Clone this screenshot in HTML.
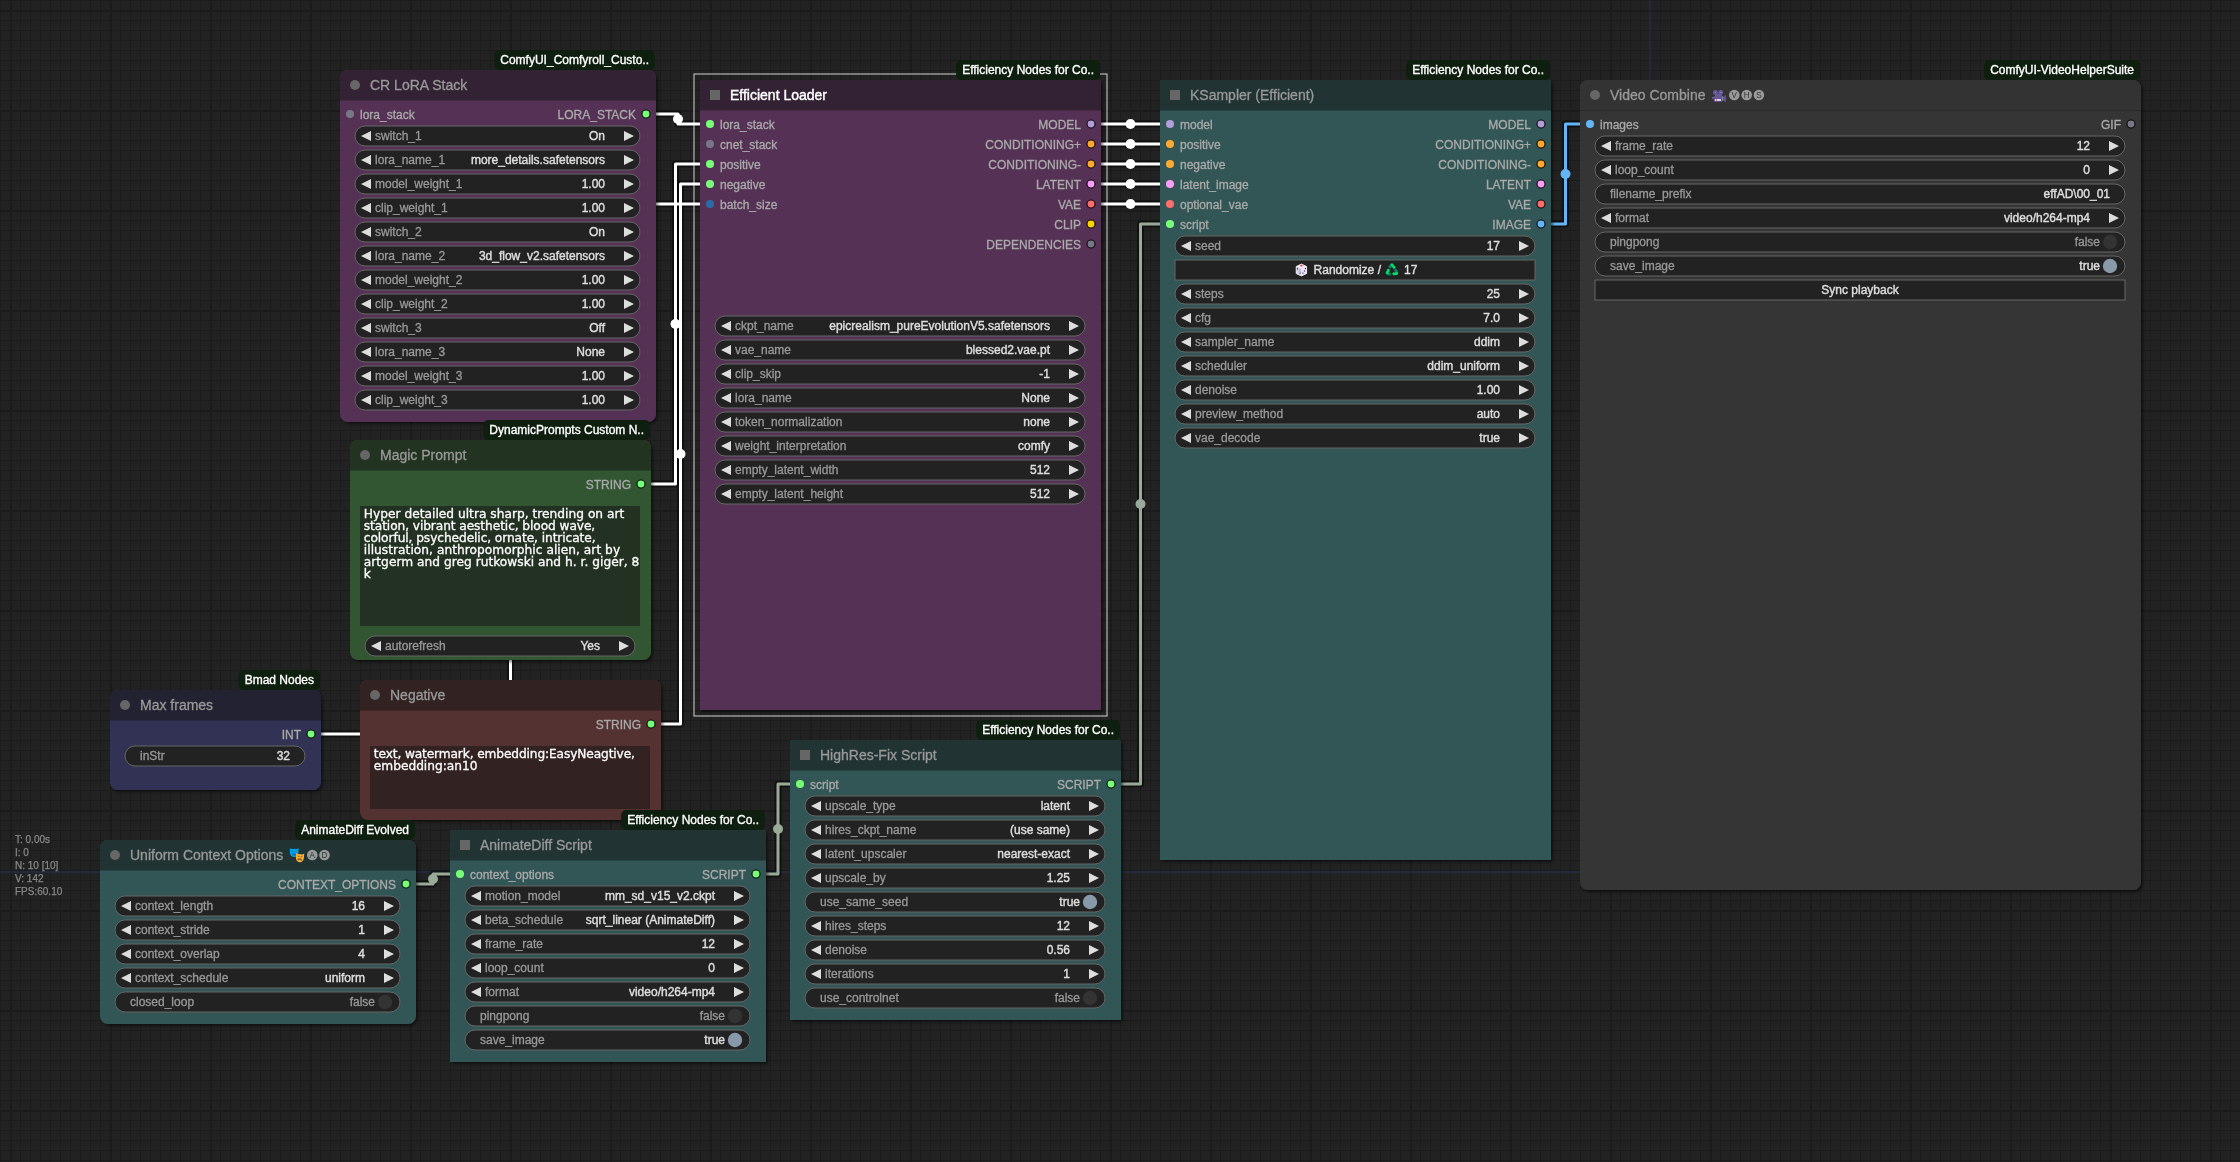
<!DOCTYPE html>
<html lang="en"><head><meta charset="utf-8"><title>ComfyUI</title>
<style>
html,body{margin:0;padding:0;background:#222;overflow:hidden}
svg{display:block;font-family:"Liberation Sans", sans-serif;will-change:transform}
text{white-space:pre;stroke-width:.3px}.wv,.wc,.wt,.tts{stroke-width:.42px}
.tt{font-size:14px;fill:#999;stroke:#999}.tts{font-size:14px;fill:#FFF;stroke:#FFF}
.sl{font-size:12px;fill:#AAA;stroke:#AAA}.sr{font-size:12px;fill:#AAA;stroke:#AAA;text-anchor:end}
.wb{fill:#222;stroke:#666;stroke-width:1}
.ar{fill:#DDD}
.wl{font-size:12px;fill:#999;stroke:#999}
.wv{font-size:12px;fill:#DDD;stroke:#DDD;text-anchor:end}
.wvo{font-size:12px;fill:#999;stroke:#999;text-anchor:end}
.wc{font-size:12px;fill:#DDD;stroke:#DDD;text-anchor:middle}
.wt{font-size:12px;fill:#DDD;stroke:#DDD}
.bd{font-size:12px;fill:#FFF;stroke:#FFF;stroke-width:.35px;paint-order:stroke}
.inf{font-size:10px;fill:#888;stroke:#888;stroke-width:.25px}
.ta{font-family:"DejaVu Sans", "Liberation Sans", sans-serif;font-size:12.2px;fill:#FAFAFA;stroke:#FAFAFA;stroke-width:.35px}
.cl{font-size:9.4px;text-anchor:middle;stroke:none}
.lk path{fill:none;stroke-linejoin:round;stroke-linecap:butt}
</style></head><body>
<svg width="2240" height="1162" viewBox="0 0 2240 1162">
<defs>
<pattern id="grid" x="10" y="10" width="100" height="100" patternUnits="userSpaceOnUse">
<rect width="100" height="100" fill="#222"/>
<path d="M10.5 0V100M0 10.5H100M20.5 0V100M0 20.5H100M30.5 0V100M0 30.5H100M40.5 0V100M0 40.5H100M50.5 0V100M0 50.5H100M60.5 0V100M0 60.5H100M70.5 0V100M0 70.5H100M80.5 0V100M0 80.5H100M90.5 0V100M0 90.5H100" stroke="#1c1c1c" stroke-width="1" fill="none"/>
<path d="M1 0V100M0 1H100" stroke="#1b1b1b" stroke-width="2" fill="none"/>
</pattern>
<filter id="sh" x="-5%" y="-5%" width="110%" height="110%"><feDropShadow dx="2" dy="2" stdDeviation="1.5" flood-color="#000" flood-opacity=".5"/></filter>
</defs>
<rect width="2240" height="1162" fill="url(#grid)"/>
<path d="M0 872H1650V0" fill="none" stroke="#235" stroke-width="1"/>
<g class="lk"><path d="M646 114H678V124H710" stroke="#000" stroke-opacity=".5" stroke-width="7"/><path d="M641 484H675.5V164H710" stroke="#000" stroke-opacity=".5" stroke-width="7"/><path d="M651 724H680.5V184H710" stroke="#000" stroke-opacity=".5" stroke-width="7"/><path d="M311 734H510.5V204H710" stroke="#000" stroke-opacity=".5" stroke-width="7"/><path d="M1091 124H1130.5V124H1170" stroke="#000" stroke-opacity=".5" stroke-width="7"/><path d="M1091 144H1130.5V144H1170" stroke="#000" stroke-opacity=".5" stroke-width="7"/><path d="M1091 164H1130.5V164H1170" stroke="#000" stroke-opacity=".5" stroke-width="7"/><path d="M1091 184H1130.5V184H1170" stroke="#000" stroke-opacity=".5" stroke-width="7"/><path d="M1091 204H1130.5V204H1170" stroke="#000" stroke-opacity=".5" stroke-width="7"/><path d="M1111 784H1140.5V224H1170" stroke="#000" stroke-opacity=".5" stroke-width="7"/><path d="M756 874H778V784H800" stroke="#000" stroke-opacity=".5" stroke-width="7"/><path d="M406 884H433V874H460" stroke="#000" stroke-opacity=".5" stroke-width="7"/><path d="M1541 224H1565.5V124H1590" stroke="#000" stroke-opacity=".5" stroke-width="7"/><path d="M646 114H678V124H710" stroke="#FFF" stroke-width="3"/><circle cx="678" cy="119" r="5" fill="#FFF" stroke="none"/><path d="M641 484H675.5V164H710" stroke="#FFF" stroke-width="3"/><circle cx="675.5" cy="324" r="5" fill="#FFF" stroke="none"/><path d="M651 724H680.5V184H710" stroke="#FFF" stroke-width="3"/><circle cx="680.5" cy="454" r="5" fill="#FFF" stroke="none"/><path d="M311 734H510.5V204H710" stroke="#FFF" stroke-width="3"/><circle cx="510.5" cy="469" r="5" fill="#FFF" stroke="none"/><path d="M1091 124H1130.5V124H1170" stroke="#FFF" stroke-width="3"/><circle cx="1130.5" cy="124" r="5" fill="#FFF" stroke="none"/><path d="M1091 144H1130.5V144H1170" stroke="#FFF" stroke-width="3"/><circle cx="1130.5" cy="144" r="5" fill="#FFF" stroke="none"/><path d="M1091 164H1130.5V164H1170" stroke="#FFF" stroke-width="3"/><circle cx="1130.5" cy="164" r="5" fill="#FFF" stroke="none"/><path d="M1091 184H1130.5V184H1170" stroke="#FFF" stroke-width="3"/><circle cx="1130.5" cy="184" r="5" fill="#FFF" stroke="none"/><path d="M1091 204H1130.5V204H1170" stroke="#FFF" stroke-width="3"/><circle cx="1130.5" cy="204" r="5" fill="#FFF" stroke="none"/><path d="M1111 784H1140.5V224H1170" stroke="#9A9" stroke-width="3"/><circle cx="1140.5" cy="504" r="5" fill="#9A9" stroke="none"/><path d="M756 874H778V784H800" stroke="#9A9" stroke-width="3"/><circle cx="778" cy="829" r="5" fill="#9A9" stroke="none"/><path d="M406 884H433V874H460" stroke="#9A9" stroke-width="3"/><circle cx="433" cy="879" r="5" fill="#9A9" stroke="none"/><path d="M1541 224H1565.5V124H1590" stroke="#64B5F6" stroke-width="3"/><circle cx="1565.5" cy="174" r="5" fill="#64B5F6" stroke="none"/></g>
<g>
<rect x="340" y="70" width="316" height="352" rx="8" fill="#535" filter="url(#sh)"/>
<rect x="340" y="99" width="316" height="2" fill="#000" fill-opacity=".2"/>
<path d="M340 100V78a8 8 0 0 1 8 -8H648a8 8 0 0 1 8 8V100Z" fill="#323"/>
<circle cx="355" cy="85" r="5" fill="#666"/>
<text class="tt" x="370" y="90">CR LoRA Stack</text>
<circle cx="350" cy="114" r="4" fill="#778"/>
<text class="sl" x="360" y="119">lora_stack</text>
<circle cx="646" cy="114" r="4" fill="#7F7" stroke="#000" stroke-opacity=".9" stroke-width="1.1"/>
<text class="sr" x="636" y="119">LORA_STACK</text>
<rect class="wb" x="355" y="126" width="285" height="20" rx="10"/>
<path class="ar" d="M371 131L361 136L371 141ZM624 131L634 136L624 141Z"/>
<text class="wl" x="375" y="140">switch_1</text>
<text class="wv" x="605" y="140">On</text>
<rect class="wb" x="355" y="150" width="285" height="20" rx="10"/>
<path class="ar" d="M371 155L361 160L371 165ZM624 155L634 160L624 165Z"/>
<text class="wl" x="375" y="164">lora_name_1</text>
<text class="wv" x="605" y="164">more_details.safetensors</text>
<rect class="wb" x="355" y="174" width="285" height="20" rx="10"/>
<path class="ar" d="M371 179L361 184L371 189ZM624 179L634 184L624 189Z"/>
<text class="wl" x="375" y="188">model_weight_1</text>
<text class="wv" x="605" y="188">1.00</text>
<rect class="wb" x="355" y="198" width="285" height="20" rx="10"/>
<path class="ar" d="M371 203L361 208L371 213ZM624 203L634 208L624 213Z"/>
<text class="wl" x="375" y="212">clip_weight_1</text>
<text class="wv" x="605" y="212">1.00</text>
<rect class="wb" x="355" y="222" width="285" height="20" rx="10"/>
<path class="ar" d="M371 227L361 232L371 237ZM624 227L634 232L624 237Z"/>
<text class="wl" x="375" y="236">switch_2</text>
<text class="wv" x="605" y="236">On</text>
<rect class="wb" x="355" y="246" width="285" height="20" rx="10"/>
<path class="ar" d="M371 251L361 256L371 261ZM624 251L634 256L624 261Z"/>
<text class="wl" x="375" y="260">lora_name_2</text>
<text class="wv" x="605" y="260">3d_flow_v2.safetensors</text>
<rect class="wb" x="355" y="270" width="285" height="20" rx="10"/>
<path class="ar" d="M371 275L361 280L371 285ZM624 275L634 280L624 285Z"/>
<text class="wl" x="375" y="284">model_weight_2</text>
<text class="wv" x="605" y="284">1.00</text>
<rect class="wb" x="355" y="294" width="285" height="20" rx="10"/>
<path class="ar" d="M371 299L361 304L371 309ZM624 299L634 304L624 309Z"/>
<text class="wl" x="375" y="308">clip_weight_2</text>
<text class="wv" x="605" y="308">1.00</text>
<rect class="wb" x="355" y="318" width="285" height="20" rx="10"/>
<path class="ar" d="M371 323L361 328L371 333ZM624 323L634 328L624 333Z"/>
<text class="wl" x="375" y="332">switch_3</text>
<text class="wv" x="605" y="332">Off</text>
<rect class="wb" x="355" y="342" width="285" height="20" rx="10"/>
<path class="ar" d="M371 347L361 352L371 357ZM624 347L634 352L624 357Z"/>
<text class="wl" x="375" y="356">lora_name_3</text>
<text class="wv" x="605" y="356">None</text>
<rect class="wb" x="355" y="366" width="285" height="20" rx="10"/>
<path class="ar" d="M371 371L361 376L371 381ZM624 371L634 376L624 381Z"/>
<text class="wl" x="375" y="380">model_weight_3</text>
<text class="wv" x="605" y="380">1.00</text>
<rect class="wb" x="355" y="390" width="285" height="20" rx="10"/>
<path class="ar" d="M371 395L361 400L371 405ZM624 395L634 400L624 405Z"/>
<text class="wl" x="375" y="404">clip_weight_3</text>
<text class="wv" x="605" y="404">1.00</text>
<rect x="494.29" y="50" width="160.71" height="20" rx="5" fill="#0F1F0F"/>
<text class="bd" x="500.29" y="64">ComfyUI_Comfyroll_Custo..</text>
</g>
<g>
<rect x="350" y="440" width="301" height="220" rx="8" fill="#353" filter="url(#sh)"/>
<rect x="350" y="469" width="301" height="2" fill="#000" fill-opacity=".2"/>
<path d="M350 470V448a8 8 0 0 1 8 -8H643a8 8 0 0 1 8 8V470Z" fill="#232"/>
<circle cx="365" cy="455" r="5" fill="#666"/>
<text class="tt" x="380" y="460">Magic Prompt</text>
<circle cx="641" cy="484" r="4" fill="#7F7" stroke="#000" stroke-opacity=".9" stroke-width="1.1"/>
<text class="sr" x="631" y="489">STRING</text>
<rect x="360" y="506" width="280" height="120" fill="#223122"/>
<text class="ta" x="363.8" y="517.5" textLength="260.5" lengthAdjust="spacing">Hyper detailed ultra sharp, trending on art</text>
<text class="ta" x="363.8" y="529.5" textLength="231.4" lengthAdjust="spacing">station, vibrant aesthetic, blood wave,</text>
<text class="ta" x="363.8" y="541.5" textLength="231.8" lengthAdjust="spacing">colorful, psychedelic, ornate, intricate,</text>
<text class="ta" x="363.8" y="553.5" textLength="256.3" lengthAdjust="spacing">illustration, anthropomorphic alien, art by</text>
<text class="ta" x="363.8" y="565.5" textLength="275.5" lengthAdjust="spacing">artgerm and greg rutkowski and h. r. giger, 8</text>
<text class="ta" x="363.8" y="577.5">k</text>
<rect class="wb" x="365" y="636" width="270" height="20" rx="10"/>
<path class="ar" d="M381 641L371 646L381 651ZM619 641L629 646L619 651Z"/>
<text class="wl" x="385" y="650">autorefresh</text>
<text class="wv" x="600" y="650">Yes</text>
<rect x="483.3" y="420" width="166.7" height="20" rx="5" fill="#0F1F0F"/>
<text class="bd" x="489.3" y="434">DynamicPrompts Custom N..</text>
</g>
<g>
<rect x="360" y="680" width="301" height="140" rx="8" fill="#533" filter="url(#sh)"/>
<rect x="360" y="709" width="301" height="2" fill="#000" fill-opacity=".2"/>
<path d="M360 710V688a8 8 0 0 1 8 -8H653a8 8 0 0 1 8 8V710Z" fill="#322"/>
<circle cx="375" cy="695" r="5" fill="#666"/>
<text class="tt" x="390" y="700">Negative</text>
<circle cx="651" cy="724" r="4" fill="#7F7" stroke="#000" stroke-opacity=".9" stroke-width="1.1"/>
<text class="sr" x="641" y="729">STRING</text>
<rect x="370" y="746" width="280" height="63" fill="#332222"/>
<text class="ta" x="373.8" y="757.5" textLength="261.1" lengthAdjust="spacing">text, watermark, embedding:EasyNeagtive,</text>
<text class="ta" x="373.8" y="769.5">embedding:an10</text>
</g>
<g>
<rect x="110" y="690" width="211" height="100" rx="8" fill="#335" filter="url(#sh)"/>
<rect x="110" y="719" width="211" height="2" fill="#000" fill-opacity=".2"/>
<path d="M110 720V698a8 8 0 0 1 8 -8H313a8 8 0 0 1 8 8V720Z" fill="#223"/>
<circle cx="125" cy="705" r="5" fill="#666"/>
<text class="tt" x="140" y="710">Max frames</text>
<circle cx="311" cy="734" r="4" fill="#7F7" stroke="#000" stroke-opacity=".9" stroke-width="1.1"/>
<text class="sr" x="301" y="739">INT</text>
<rect class="wb" x="125" y="746" width="180" height="20" rx="10"/>
<text class="wl" x="140" y="760">inStr</text>
<text class="wv" x="290" y="760">32</text>
<rect x="238.63" y="670" width="81.37" height="20" rx="5" fill="#0F1F0F"/>
<text class="bd" x="244.63" y="684">Bmad Nodes</text>
</g>
<g>
<rect x="100" y="840" width="316" height="184" rx="8" fill="#355" filter="url(#sh)"/>
<rect x="100" y="869" width="316" height="2" fill="#000" fill-opacity=".2"/>
<path d="M100 870V848a8 8 0 0 1 8 -8H408a8 8 0 0 1 8 8V870Z" fill="#233"/>
<circle cx="115" cy="855" r="5" fill="#666"/>
<text class="tt" x="130" y="860">Uniform Context Options</text>
<g transform="translate(289.9,847.7)"><path d="M0 .2C1.4 1.5 2.9 1.6 4.3 1.1 5.7 1.6 7.2 1.5 8.6 .2V4.8C8.6 7.4 6.6 9.4 4.3 9.4 2 9.4 0 7.4 0 4.8Z" fill="#00A6ED"/><path d="M1.5 3.7Q2.6 3 3.6 3.7M5 3.7Q6 3 7.1 3.7" fill="none" stroke="#0074BA" stroke-width=".9"/><path d="M1.9 5.6Q4.3 6.4 6.7 5.6 6 8.2 4.3 8.2 2.6 8.2 1.9 5.6Z" fill="#0074BA"/></g>
<g transform="translate(295.9,852.9) rotate(4 4 4.6)"><path d="M0 .2C1.3 1.5 2.7 1.6 4 1.1 5.3 1.6 6.7 1.5 8 .2V4.8C8 7.4 6.2 9.3 4 9.3 1.8 9.3 0 7.4 0 4.8Z" fill="#FFB02E"/><path d="M1.5 3.2Q2.5 4 3.4 3.6M4.6 3.6Q5.5 4 6.5 3.2" fill="none" stroke="#6D4534" stroke-width=".8"/><path d="M2 7.3Q4 4.6 6 7.3" fill="none" stroke="#6D4534" stroke-width="1.1"/></g>
<circle cx="312.3" cy="855" r="5.3" fill="#999"/><text class="cl" transform="translate(312.3,858.4) scale(.86,1)" fill="#233">A</text>
<circle cx="324.5" cy="855" r="5.3" fill="#999"/><text class="cl" transform="translate(324.5,858.4) scale(.86,1)" fill="#233">D</text>
<circle cx="406" cy="884" r="4" fill="#7F7" stroke="#000" stroke-opacity=".9" stroke-width="1.1"/>
<text class="sr" x="396" y="889">CONTEXT_OPTIONS</text>
<rect class="wb" x="115" y="896" width="285" height="20" rx="10"/>
<path class="ar" d="M131 901L121 906L131 911ZM384 901L394 906L384 911Z"/>
<text class="wl" x="135" y="910">context_length</text>
<text class="wv" x="365" y="910">16</text>
<rect class="wb" x="115" y="920" width="285" height="20" rx="10"/>
<path class="ar" d="M131 925L121 930L131 935ZM384 925L394 930L384 935Z"/>
<text class="wl" x="135" y="934">context_stride</text>
<text class="wv" x="365" y="934">1</text>
<rect class="wb" x="115" y="944" width="285" height="20" rx="10"/>
<path class="ar" d="M131 949L121 954L131 959ZM384 949L394 954L384 959Z"/>
<text class="wl" x="135" y="958">context_overlap</text>
<text class="wv" x="365" y="958">4</text>
<rect class="wb" x="115" y="968" width="285" height="20" rx="10"/>
<path class="ar" d="M131 973L121 978L131 983ZM384 973L394 978L384 983Z"/>
<text class="wl" x="135" y="982">context_schedule</text>
<text class="wv" x="365" y="982">uniform</text>
<rect class="wb" x="115" y="992" width="285" height="20" rx="10"/>
<circle cx="385" cy="1002" r="7.2" fill="#333"/>
<text class="wl" x="130" y="1006">closed_loop</text>
<text class="wvo" x="375" y="1006">false</text>
<rect x="295.17" y="820" width="119.83" height="20" rx="5" fill="#0F1F0F"/>
<text class="bd" x="301.17" y="834">AnimateDiff Evolved</text>
</g>
<g>
<rect x="450" y="830" width="316" height="232" fill="#355" filter="url(#sh)"/>
<rect x="450" y="859" width="316" height="2" fill="#000" fill-opacity=".2"/>
<rect x="450" y="830" width="316" height="30" fill="#233"/>
<rect x="460" y="840" width="10" height="10" fill="#666"/>
<text class="tt" x="480" y="850">AnimateDiff Script</text>
<circle cx="460" cy="874" r="4" fill="#7F7"/>
<text class="sl" x="470" y="879">context_options</text>
<circle cx="756" cy="874" r="4" fill="#7F7" stroke="#000" stroke-opacity=".9" stroke-width="1.1"/>
<text class="sr" x="746" y="879">SCRIPT</text>
<rect class="wb" x="465" y="886" width="285" height="20" rx="10"/>
<path class="ar" d="M481 891L471 896L481 901ZM734 891L744 896L734 901Z"/>
<text class="wl" x="485" y="900">motion_model</text>
<text class="wv" x="715" y="900">mm_sd_v15_v2.ckpt</text>
<rect class="wb" x="465" y="910" width="285" height="20" rx="10"/>
<path class="ar" d="M481 915L471 920L481 925ZM734 915L744 920L734 925Z"/>
<text class="wl" x="485" y="924">beta_schedule</text>
<text class="wv" x="715" y="924">sqrt_linear (AnimateDiff)</text>
<rect class="wb" x="465" y="934" width="285" height="20" rx="10"/>
<path class="ar" d="M481 939L471 944L481 949ZM734 939L744 944L734 949Z"/>
<text class="wl" x="485" y="948">frame_rate</text>
<text class="wv" x="715" y="948">12</text>
<rect class="wb" x="465" y="958" width="285" height="20" rx="10"/>
<path class="ar" d="M481 963L471 968L481 973ZM734 963L744 968L734 973Z"/>
<text class="wl" x="485" y="972">loop_count</text>
<text class="wv" x="715" y="972">0</text>
<rect class="wb" x="465" y="982" width="285" height="20" rx="10"/>
<path class="ar" d="M481 987L471 992L481 997ZM734 987L744 992L734 997Z"/>
<text class="wl" x="485" y="996">format</text>
<text class="wv" x="715" y="996">video/h264-mp4</text>
<rect class="wb" x="465" y="1006" width="285" height="20" rx="10"/>
<circle cx="735" cy="1016" r="7.2" fill="#333"/>
<text class="wl" x="480" y="1020">pingpong</text>
<text class="wvo" x="725" y="1020">false</text>
<rect class="wb" x="465" y="1030" width="285" height="20" rx="10"/>
<circle cx="735" cy="1040" r="7.2" fill="#89A"/>
<text class="wl" x="480" y="1044">save_image</text>
<text class="wv" x="725" y="1044">true</text>
<rect x="621.16" y="810" width="143.84" height="20" rx="5" fill="#0F1F0F"/>
<text class="bd" x="627.16" y="824">Efficiency Nodes for Co..</text>
</g>
<g>
<rect x="700" y="80" width="401" height="630" fill="#535" filter="url(#sh)"/>
<rect x="700" y="109" width="401" height="2" fill="#000" fill-opacity=".2"/>
<rect x="700" y="80" width="401" height="30" fill="#323"/>
<rect x="710" y="90" width="10" height="10" fill="#666"/>
<text class="tts" x="730" y="100">Efficient Loader</text>
<circle cx="710" cy="124" r="4" fill="#7F7"/>
<text class="sl" x="720" y="129">lora_stack</text>
<circle cx="710" cy="144" r="4" fill="#778"/>
<text class="sl" x="720" y="149">cnet_stack</text>
<circle cx="710" cy="164" r="4" fill="#7F7"/>
<text class="sl" x="720" y="169">positive</text>
<circle cx="710" cy="184" r="4" fill="#7F7"/>
<text class="sl" x="720" y="189">negative</text>
<circle cx="710" cy="204" r="4" fill="#2B6BA3"/>
<text class="sl" x="720" y="209">batch_size</text>
<circle cx="1091" cy="124" r="4" fill="#B39DDB" stroke="#000" stroke-opacity=".9" stroke-width="1.1"/>
<text class="sr" x="1081" y="129">MODEL</text>
<circle cx="1091" cy="144" r="4" fill="#FFA931" stroke="#000" stroke-opacity=".9" stroke-width="1.1"/>
<text class="sr" x="1081" y="149">CONDITIONING+</text>
<circle cx="1091" cy="164" r="4" fill="#FFA931" stroke="#000" stroke-opacity=".9" stroke-width="1.1"/>
<text class="sr" x="1081" y="169">CONDITIONING-</text>
<circle cx="1091" cy="184" r="4" fill="#FF9CF9" stroke="#000" stroke-opacity=".9" stroke-width="1.1"/>
<text class="sr" x="1081" y="189">LATENT</text>
<circle cx="1091" cy="204" r="4" fill="#FF6E6E" stroke="#000" stroke-opacity=".9" stroke-width="1.1"/>
<text class="sr" x="1081" y="209">VAE</text>
<circle cx="1091" cy="224" r="4" fill="#FFD500" stroke="#000" stroke-opacity=".9" stroke-width="1.1"/>
<text class="sr" x="1081" y="229">CLIP</text>
<circle cx="1091" cy="244" r="4" fill="#778" stroke="#000" stroke-opacity=".9" stroke-width="1.1"/>
<text class="sr" x="1081" y="249">DEPENDENCIES</text>
<rect class="wb" x="715" y="316" width="370" height="20" rx="10"/>
<path class="ar" d="M731 321L721 326L731 331ZM1069 321L1079 326L1069 331Z"/>
<text class="wl" x="735" y="330">ckpt_name</text>
<text class="wv" x="1050" y="330">epicrealism_pureEvolutionV5.safetensors</text>
<rect class="wb" x="715" y="340" width="370" height="20" rx="10"/>
<path class="ar" d="M731 345L721 350L731 355ZM1069 345L1079 350L1069 355Z"/>
<text class="wl" x="735" y="354">vae_name</text>
<text class="wv" x="1050" y="354">blessed2.vae.pt</text>
<rect class="wb" x="715" y="364" width="370" height="20" rx="10"/>
<path class="ar" d="M731 369L721 374L731 379ZM1069 369L1079 374L1069 379Z"/>
<text class="wl" x="735" y="378">clip_skip</text>
<text class="wv" x="1050" y="378">-1</text>
<rect class="wb" x="715" y="388" width="370" height="20" rx="10"/>
<path class="ar" d="M731 393L721 398L731 403ZM1069 393L1079 398L1069 403Z"/>
<text class="wl" x="735" y="402">lora_name</text>
<text class="wv" x="1050" y="402">None</text>
<rect class="wb" x="715" y="412" width="370" height="20" rx="10"/>
<path class="ar" d="M731 417L721 422L731 427ZM1069 417L1079 422L1069 427Z"/>
<text class="wl" x="735" y="426">token_normalization</text>
<text class="wv" x="1050" y="426">none</text>
<rect class="wb" x="715" y="436" width="370" height="20" rx="10"/>
<path class="ar" d="M731 441L721 446L731 451ZM1069 441L1079 446L1069 451Z"/>
<text class="wl" x="735" y="450">weight_interpretation</text>
<text class="wv" x="1050" y="450">comfy</text>
<rect class="wb" x="715" y="460" width="370" height="20" rx="10"/>
<path class="ar" d="M731 465L721 470L731 475ZM1069 465L1079 470L1069 475Z"/>
<text class="wl" x="735" y="474">empty_latent_width</text>
<text class="wv" x="1050" y="474">512</text>
<rect class="wb" x="715" y="484" width="370" height="20" rx="10"/>
<path class="ar" d="M731 489L721 494L731 499ZM1069 489L1079 494L1069 499Z"/>
<text class="wl" x="735" y="498">empty_latent_height</text>
<text class="wv" x="1050" y="498">512</text>
<rect x="694" y="74" width="413" height="642" fill="none" stroke="#FFF" stroke-opacity=".8"/>
<rect x="956.16" y="60" width="143.84" height="20" rx="5" fill="#0F1F0F"/>
<text class="bd" x="962.16" y="74">Efficiency Nodes for Co..</text>
</g>
<g>
<rect x="790" y="740" width="331" height="280" fill="#355" filter="url(#sh)"/>
<rect x="790" y="769" width="331" height="2" fill="#000" fill-opacity=".2"/>
<rect x="790" y="740" width="331" height="30" fill="#233"/>
<rect x="800" y="750" width="10" height="10" fill="#666"/>
<text class="tt" x="820" y="760">HighRes-Fix Script</text>
<circle cx="800" cy="784" r="4" fill="#7F7"/>
<text class="sl" x="810" y="789">script</text>
<circle cx="1111" cy="784" r="4" fill="#7F7" stroke="#000" stroke-opacity=".9" stroke-width="1.1"/>
<text class="sr" x="1101" y="789">SCRIPT</text>
<rect class="wb" x="805" y="796" width="300" height="20" rx="10"/>
<path class="ar" d="M821 801L811 806L821 811ZM1089 801L1099 806L1089 811Z"/>
<text class="wl" x="825" y="810">upscale_type</text>
<text class="wv" x="1070" y="810">latent</text>
<rect class="wb" x="805" y="820" width="300" height="20" rx="10"/>
<path class="ar" d="M821 825L811 830L821 835ZM1089 825L1099 830L1089 835Z"/>
<text class="wl" x="825" y="834">hires_ckpt_name</text>
<text class="wv" x="1070" y="834">(use same)</text>
<rect class="wb" x="805" y="844" width="300" height="20" rx="10"/>
<path class="ar" d="M821 849L811 854L821 859ZM1089 849L1099 854L1089 859Z"/>
<text class="wl" x="825" y="858">latent_upscaler</text>
<text class="wv" x="1070" y="858">nearest-exact</text>
<rect class="wb" x="805" y="868" width="300" height="20" rx="10"/>
<path class="ar" d="M821 873L811 878L821 883ZM1089 873L1099 878L1089 883Z"/>
<text class="wl" x="825" y="882">upscale_by</text>
<text class="wv" x="1070" y="882">1.25</text>
<rect class="wb" x="805" y="892" width="300" height="20" rx="10"/>
<circle cx="1090" cy="902" r="7.2" fill="#89A"/>
<text class="wl" x="820" y="906">use_same_seed</text>
<text class="wv" x="1080" y="906">true</text>
<rect class="wb" x="805" y="916" width="300" height="20" rx="10"/>
<path class="ar" d="M821 921L811 926L821 931ZM1089 921L1099 926L1089 931Z"/>
<text class="wl" x="825" y="930">hires_steps</text>
<text class="wv" x="1070" y="930">12</text>
<rect class="wb" x="805" y="940" width="300" height="20" rx="10"/>
<path class="ar" d="M821 945L811 950L821 955ZM1089 945L1099 950L1089 955Z"/>
<text class="wl" x="825" y="954">denoise</text>
<text class="wv" x="1070" y="954">0.56</text>
<rect class="wb" x="805" y="964" width="300" height="20" rx="10"/>
<path class="ar" d="M821 969L811 974L821 979ZM1089 969L1099 974L1089 979Z"/>
<text class="wl" x="825" y="978">iterations</text>
<text class="wv" x="1070" y="978">1</text>
<rect class="wb" x="805" y="988" width="300" height="20" rx="10"/>
<circle cx="1090" cy="998" r="7.2" fill="#333"/>
<text class="wl" x="820" y="1002">use_controlnet</text>
<text class="wvo" x="1080" y="1002">false</text>
<rect x="976.16" y="720" width="143.84" height="20" rx="5" fill="#0F1F0F"/>
<text class="bd" x="982.16" y="734">Efficiency Nodes for Co..</text>
</g>
<g>
<rect x="1160" y="80" width="391" height="780" fill="#355" filter="url(#sh)"/>
<rect x="1160" y="109" width="391" height="2" fill="#000" fill-opacity=".2"/>
<rect x="1160" y="80" width="391" height="30" fill="#233"/>
<rect x="1170" y="90" width="10" height="10" fill="#666"/>
<text class="tt" x="1190" y="100">KSampler (Efficient)</text>
<circle cx="1170" cy="124" r="4" fill="#B39DDB"/>
<text class="sl" x="1180" y="129">model</text>
<circle cx="1170" cy="144" r="4" fill="#FFA931"/>
<text class="sl" x="1180" y="149">positive</text>
<circle cx="1170" cy="164" r="4" fill="#FFA931"/>
<text class="sl" x="1180" y="169">negative</text>
<circle cx="1170" cy="184" r="4" fill="#FF9CF9"/>
<text class="sl" x="1180" y="189">latent_image</text>
<circle cx="1170" cy="204" r="4" fill="#FF6E6E"/>
<text class="sl" x="1180" y="209">optional_vae</text>
<circle cx="1170" cy="224" r="4" fill="#7F7"/>
<text class="sl" x="1180" y="229">script</text>
<circle cx="1541" cy="124" r="4" fill="#B39DDB" stroke="#000" stroke-opacity=".9" stroke-width="1.1"/>
<text class="sr" x="1531" y="129">MODEL</text>
<circle cx="1541" cy="144" r="4" fill="#FFA931" stroke="#000" stroke-opacity=".9" stroke-width="1.1"/>
<text class="sr" x="1531" y="149">CONDITIONING+</text>
<circle cx="1541" cy="164" r="4" fill="#FFA931" stroke="#000" stroke-opacity=".9" stroke-width="1.1"/>
<text class="sr" x="1531" y="169">CONDITIONING-</text>
<circle cx="1541" cy="184" r="4" fill="#FF9CF9" stroke="#000" stroke-opacity=".9" stroke-width="1.1"/>
<text class="sr" x="1531" y="189">LATENT</text>
<circle cx="1541" cy="204" r="4" fill="#FF6E6E" stroke="#000" stroke-opacity=".9" stroke-width="1.1"/>
<text class="sr" x="1531" y="209">VAE</text>
<circle cx="1541" cy="224" r="4" fill="#64B5F6" stroke="#000" stroke-opacity=".9" stroke-width="1.1"/>
<text class="sr" x="1531" y="229">IMAGE</text>
<rect class="wb" x="1175" y="236" width="360" height="20" rx="10"/>
<path class="ar" d="M1191 241L1181 246L1191 251ZM1519 241L1529 246L1519 251Z"/>
<text class="wl" x="1195" y="250">seed</text>
<text class="wv" x="1500" y="250">17</text>
<rect class="wb" x="1175" y="260" width="360" height="20"/>
<g transform="translate(1290,260)"><path d="M11.4 4.1L16.6 6.5V13.5L11.4 15.9L6.2 13.5V6.5Z" fill="#F1EBF8" stroke="#F1EBF8" stroke-width=".9" stroke-linejoin="round"/><path d="M6.2 6.6L11.4 8.7V15.9L6.2 13.5Z" fill="#DCD5E5"/><path d="M16.6 6.6L11.4 8.7V15.9L16.6 13.5Z" fill="#EBE4F3"/><path d="M8.7 8.5L10.8 9.3V12.7L8.7 11.9Z" fill="#B9B1C3" fill-opacity=".85"/><ellipse cx="11.4" cy="5.6" rx="1.4" ry=".85" fill="#FF4545"/><g fill="#3F3A78"><ellipse cx="7.5" cy="8.7" rx=".6" ry=".95"/><ellipse cx="10" cy="13.1" rx=".85" ry=".7"/><ellipse cx="15.5" cy="8.6" rx=".6" ry=".95"/><ellipse cx="14.4" cy="11" rx=".55" ry=".85"/><ellipse cx="12.9" cy="13.1" rx=".85" ry=".7"/></g></g>
<text class="wt" x="1313.6" y="274">Randomize /</text>
<g transform="translate(1385.9,263.8)" fill="none" stroke-width="2.7"><path d="M5.6 1L3.3 4.1" stroke="#00896A"/><path d="M9.1 5.5L10.9 8.5" stroke="#00896A"/><path d="M1.6 10.3H5" stroke="#00896A"/><path d="M4.9 1.2L6.1 .9L8.9 4.6" stroke="#00DE6E" stroke-linejoin="round"/><path d="M3.1 5.3L1.2 8.8L1.6 10.3" stroke="#00DE6E" stroke-linejoin="round"/><path d="M11.2 8.3L10.6 9.9L8 10" stroke="#00DE6E" stroke-linejoin="round"/><path d="M6 10L8.2 7.9V12Z" fill="#00DE6E" stroke="none"/></g>
<text class="wt" x="1404" y="274">17</text>
<rect class="wb" x="1175" y="284" width="360" height="20" rx="10"/>
<path class="ar" d="M1191 289L1181 294L1191 299ZM1519 289L1529 294L1519 299Z"/>
<text class="wl" x="1195" y="298">steps</text>
<text class="wv" x="1500" y="298">25</text>
<rect class="wb" x="1175" y="308" width="360" height="20" rx="10"/>
<path class="ar" d="M1191 313L1181 318L1191 323ZM1519 313L1529 318L1519 323Z"/>
<text class="wl" x="1195" y="322">cfg</text>
<text class="wv" x="1500" y="322">7.0</text>
<rect class="wb" x="1175" y="332" width="360" height="20" rx="10"/>
<path class="ar" d="M1191 337L1181 342L1191 347ZM1519 337L1529 342L1519 347Z"/>
<text class="wl" x="1195" y="346">sampler_name</text>
<text class="wv" x="1500" y="346">ddim</text>
<rect class="wb" x="1175" y="356" width="360" height="20" rx="10"/>
<path class="ar" d="M1191 361L1181 366L1191 371ZM1519 361L1529 366L1519 371Z"/>
<text class="wl" x="1195" y="370">scheduler</text>
<text class="wv" x="1500" y="370">ddim_uniform</text>
<rect class="wb" x="1175" y="380" width="360" height="20" rx="10"/>
<path class="ar" d="M1191 385L1181 390L1191 395ZM1519 385L1529 390L1519 395Z"/>
<text class="wl" x="1195" y="394">denoise</text>
<text class="wv" x="1500" y="394">1.00</text>
<rect class="wb" x="1175" y="404" width="360" height="20" rx="10"/>
<path class="ar" d="M1191 409L1181 414L1191 419ZM1519 409L1529 414L1519 419Z"/>
<text class="wl" x="1195" y="418">preview_method</text>
<text class="wv" x="1500" y="418">auto</text>
<rect class="wb" x="1175" y="428" width="360" height="20" rx="10"/>
<path class="ar" d="M1191 433L1181 438L1191 443ZM1519 433L1529 438L1519 443Z"/>
<text class="wl" x="1195" y="442">vae_decode</text>
<text class="wv" x="1500" y="442">true</text>
<rect x="1406.16" y="60" width="143.84" height="20" rx="5" fill="#0F1F0F"/>
<text class="bd" x="1412.16" y="74">Efficiency Nodes for Co..</text>
</g>
<g>
<rect x="1580" y="80" width="561" height="810" rx="8" fill="#353535" filter="url(#sh)"/>
<rect x="1580" y="109" width="561" height="2" fill="#000" fill-opacity=".2"/>
<path d="M1580 110V88a8 8 0 0 1 8 -8H2133a8 8 0 0 1 8 8V110Z" fill="#333"/>
<circle cx="1595" cy="95" r="5" fill="#666"/>
<text class="tt" x="1610" y="100">Video Combine</text>
<g transform="translate(1708,86)"><g fill="#675A9E"><circle cx="7.4" cy="6.45" r="2.45"/><circle cx="12.65" cy="6.45" r="2.45"/><rect x="6.9" y="7.8" width="6.9" height="3"/><rect x="5.85" y="10.2" width="8.1" height="5.65" rx=".6"/><path d="M14.9 11.1L17.95 9V16L14.9 14.5Z" fill="#62569A"/></g><rect x="14" y="10.3" width=".95" height="4.5" fill="#8C879A"/><rect x="3.95" y="11" width="1.8" height="1.4" rx=".4" fill="#8A8890" fill-opacity=".85"/><rect x="6.9" y="11.8" width="6.2" height=".35" fill="#564B8C"/><rect x="6.9" y="13" width="6" height="1.8" fill="#E9E8F0"/><rect x="7.85" y="13" width="1.1" height="1.8" fill="#E0607C"/><rect x="10.4" y="13" width="2.5" height="1.8" fill="#C9C4DA" fill-opacity=".8"/><circle cx="7.4" cy="6.45" r=".55" fill="#9A92C2"/><circle cx="12.65" cy="6.45" r=".55" fill="#9A92C2"/></g>
<circle cx="1734.3" cy="95" r="5.3" fill="#999"/><text class="cl" transform="translate(1734.3,98.4) scale(.86,1)" fill="#333">V</text>
<circle cx="1746.7" cy="95" r="5.3" fill="#999"/><text class="cl" transform="translate(1746.7,98.4) scale(.86,1)" fill="#333">H</text>
<circle cx="1758.9" cy="95" r="5.3" fill="#999"/><text class="cl" transform="translate(1758.9,98.4) scale(.86,1)" fill="#333">S</text>
<circle cx="1590" cy="124" r="4" fill="#64B5F6"/>
<text class="sl" x="1600" y="129">images</text>
<circle cx="2131" cy="124" r="4" fill="#778" stroke="#000" stroke-opacity=".9" stroke-width="1.1"/>
<text class="sr" x="2121" y="129">GIF</text>
<rect class="wb" x="1595" y="136" width="530" height="20" rx="10"/>
<path class="ar" d="M1611 141L1601 146L1611 151ZM2109 141L2119 146L2109 151Z"/>
<text class="wl" x="1615" y="150">frame_rate</text>
<text class="wv" x="2090" y="150">12</text>
<rect class="wb" x="1595" y="160" width="530" height="20" rx="10"/>
<path class="ar" d="M1611 165L1601 170L1611 175ZM2109 165L2119 170L2109 175Z"/>
<text class="wl" x="1615" y="174">loop_count</text>
<text class="wv" x="2090" y="174">0</text>
<rect class="wb" x="1595" y="184" width="530" height="20" rx="10"/>
<text class="wl" x="1610" y="198">filename_prefix</text>
<text class="wv" x="2110" y="198">effAD\00_01</text>
<rect class="wb" x="1595" y="208" width="530" height="20" rx="10"/>
<path class="ar" d="M1611 213L1601 218L1611 223ZM2109 213L2119 218L2109 223Z"/>
<text class="wl" x="1615" y="222">format</text>
<text class="wv" x="2090" y="222">video/h264-mp4</text>
<rect class="wb" x="1595" y="232" width="530" height="20" rx="10"/>
<circle cx="2110" cy="242" r="7.2" fill="#333"/>
<text class="wl" x="1610" y="246">pingpong</text>
<text class="wvo" x="2100" y="246">false</text>
<rect class="wb" x="1595" y="256" width="530" height="20" rx="10"/>
<circle cx="2110" cy="266" r="7.2" fill="#89A"/>
<text class="wl" x="1610" y="270">save_image</text>
<text class="wv" x="2100" y="270">true</text>
<rect class="wb" x="1595" y="280" width="530" height="20"/>
<text class="wc" x="1860" y="294">Sync playback</text>
<rect x="1984.16" y="60" width="155.84" height="20" rx="5" fill="#0F1F0F"/>
<text class="bd" x="1990.16" y="74">ComfyUI-VideoHelperSuite</text>
</g>
<text class="inf" x="15" y="843.4">T: 0.00s</text>
<text class="inf" x="15" y="856.4">I: 0</text>
<text class="inf" x="15" y="869.4">N: 10 [10]</text>
<text class="inf" x="15" y="882.4">V: 142</text>
<text class="inf" x="15" y="895.4">FPS:60.10</text>
</svg></body></html>
